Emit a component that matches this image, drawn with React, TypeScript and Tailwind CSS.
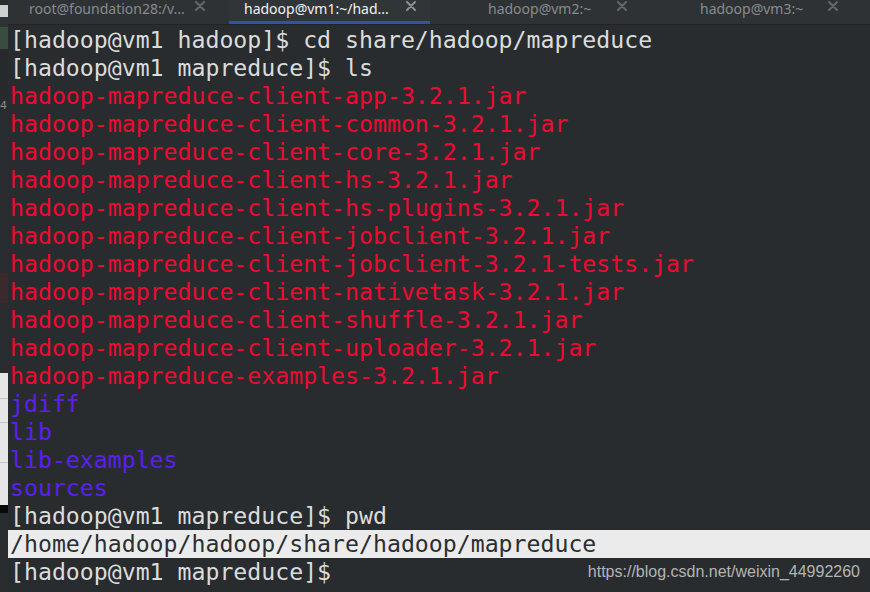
import React from "react";

type Line = { text: string; tone: "plain" | "jar" | "dir" | "sel" };

const LINES: Line[] = [
  { text: "[hadoop@vm1 hadoop]$ cd share/hadoop/mapreduce", tone: "plain" },
  { text: "[hadoop@vm1 mapreduce]$ ls", tone: "plain" },
  { text: "hadoop-mapreduce-client-app-3.2.1.jar", tone: "jar" },
  { text: "hadoop-mapreduce-client-common-3.2.1.jar", tone: "jar" },
  { text: "hadoop-mapreduce-client-core-3.2.1.jar", tone: "jar" },
  { text: "hadoop-mapreduce-client-hs-3.2.1.jar", tone: "jar" },
  { text: "hadoop-mapreduce-client-hs-plugins-3.2.1.jar", tone: "jar" },
  { text: "hadoop-mapreduce-client-jobclient-3.2.1.jar", tone: "jar" },
  { text: "hadoop-mapreduce-client-jobclient-3.2.1-tests.jar", tone: "jar" },
  { text: "hadoop-mapreduce-client-nativetask-3.2.1.jar", tone: "jar" },
  { text: "hadoop-mapreduce-client-shuffle-3.2.1.jar", tone: "jar" },
  { text: "hadoop-mapreduce-client-uploader-3.2.1.jar", tone: "jar" },
  { text: "hadoop-mapreduce-examples-3.2.1.jar", tone: "jar" },
  { text: "jdiff", tone: "dir" },
  { text: "lib", tone: "dir" },
  { text: "lib-examples", tone: "dir" },
  { text: "sources", tone: "dir" },
  { text: "[hadoop@vm1 mapreduce]$ pwd", tone: "plain" },
  { text: "/home/hadoop/hadoop/share/hadoop/mapreduce", tone: "sel" },
  { text: "[hadoop@vm1 mapreduce]$", tone: "plain" },
];

const TONE: Record<Line["tone"], string> = {
  plain: "text-[#dcdcdc]",
  jar: "text-[#ee0a30]",
  dir: "text-[#5b1ff2]",
  sel: "text-[#2a2e31] bg-[#ebebeb]",
};

const TABS = [
  { title: "root@foundation28:/v...", w: "w-[221px]", pad: "pl-[21px] pr-[24px]", active: false },
  { title: "hadoop@vm1:~/had...", w: "w-[201px]", pad: "pl-[15px] pr-[14px]", active: true },
  { title: "hadoop@vm2:~", w: "w-[211px]", pad: "pl-[58px] pr-[14px]", active: false },
  { title: "hadoop@vm3:~", w: "w-[211px]", pad: "pl-[59px] pr-[14px]", active: false },
];

function CloseIcon({ light }: { light: boolean }) {
  return (
    <svg width="10" height="10" viewBox="0 0 10 10" className="shrink-0 mt-[1px]">
      <path d="M1 1 L9 9 M9 1 L1 9" stroke={light ? "#8c9093" : "#64686b"} strokeWidth="2" strokeLinecap="round" />
    </svg>
  );
}

export default function App() {
  return (
    <div className="w-[870px] h-[592px] flex overflow-hidden bg-[#282c2f]">
      {/* sliver of the window behind */}
      <div className="w-[8px] shrink-0 flex flex-col bg-[#2a2d30]">
        <div className="h-[5px]" />
        <div className="h-[12px] bg-[#cfd1d1]" />
        <div className="h-[10px] bg-[#2e3234]" />
        <div className="h-[22px] bg-[#3a4b3f]" />
        <div className="h-[50px] bg-[#262a2c]" />
        <div className="h-[14px] text-[11px] leading-[14px] text-[#8a8a8a] font-['DejaVu_Sans',sans-serif]">4</div>
        <div className="h-[160px]" />
        <div className="h-[30px] bg-[#3a2a2c]" />
        <div className="h-[70px]" />
        <div className="h-[132px] bg-[#e6e6e6] flex flex-col">
          <div className="h-[26px] border-b border-[#c4c4c4]" />
          <div className="h-[24px] border-b border-[#c4c4c4]" />
          <div className="h-[40px] border-b border-[#c4c4c4]" />
        </div>
        <div className="h-[8px] bg-[#0a0a0a]" />
      </div>

      <div className="flex-1 flex flex-col min-w-0">
        {/* tab bar */}
        <div className="h-[25px] shrink-0 flex bg-[#2e3235] border-b border-[#212427]">
          {TABS.map(t => (
            <div
              key={t.title}
              className={`${t.w} ${t.pad} shrink-0 relative flex items-start ${t.active ? "bg-[#303538]" : ""}`}
            >
              <span
                className={`flex-1 text-[14px] leading-[18px] whitespace-nowrap font-['Noto_Sans',sans-serif] ${t.active ? "text-[#f2f2f2]" : "text-[#878b8e]"}`}
              >
                {t.title}
              </span>
              <CloseIcon light={t.active} />
              {t.active && <div className="absolute left-0 right-0 bottom-0 h-[3px] bg-[#3650a8]" />}
            </div>
          ))}
        </div>

        {/* terminal */}
        <div className="relative flex-1 flex flex-col pt-[1px] font-['DejaVu_Sans_Mono',monospace] text-[23.2px] leading-[28px]">
          {LINES.map((l, i) => (
            <div key={i} className={`h-[28px] pl-[2px] whitespace-pre ${TONE[l.tone]}`}>
              {l.text}
            </div>
          ))}
          <div className="absolute right-[10px] bottom-[10px] text-[16px] leading-[20px] text-[#b4b4b4] font-['Liberation_Sans',sans-serif]">
            https://blog.csdn.net/weixin_44992260
          </div>
        </div>
      </div>
    </div>
  );
}
